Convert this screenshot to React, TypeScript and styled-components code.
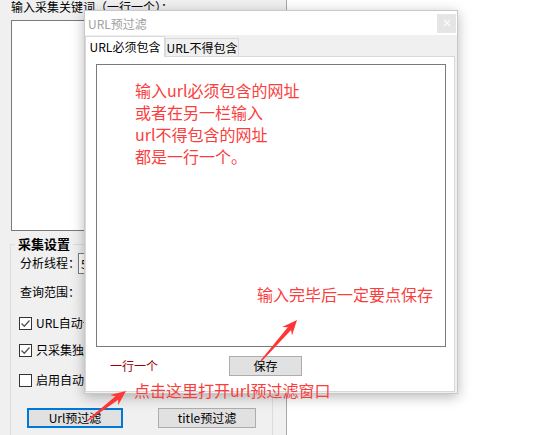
import React from "react";
import styled, { createGlobalStyle } from "styled-components";

const RED = "#fa3e3e";

const GlobalStyle = createGlobalStyle`
  html, body {
    margin: 0;
    padding: 0;
    background: #fff;
  }
  body {
    font-family: "Noto Sans CJK SC", "Liberation Sans", sans-serif;
    font-size: 12px;
    color: #000;
  }
  * {
    box-sizing: border-box;
  }
`;

const Screen = styled.div`
  position: relative;
  width: 534px;
  height: 435px;
  overflow: hidden;
  background: #fff;
`;

/* background window */

const MainWindow = styled.div`
  width: 287px;
  height: 435px;
  background: #f0f0f0;
  border-right: 1px solid #a6a6a6;
  padding-left: 10px;
  display: flex;
  flex-direction: column;
`;

const KeywordLabel = styled.div`
  height: 20px;
  line-height: 14px;
  padding-left: 1px;
  white-space: nowrap;
`;

const KeywordBox = styled.div`
  margin-left: 1px;
  width: 262px;
  height: 211px;
  background: #fff;
  border: 1px solid #7a7a7a;
`;

const Group = styled.fieldset`
  margin: 6px 0 0 0;
  width: 263px;
  flex: 1;
  padding: 0 0 0 9px;
  border: 1px solid #dcdcdc;
  border-bottom: none;
  min-inline-size: auto;
  display: flex;
  flex-direction: column;
`;

const GroupTitle = styled.legend`
  margin-left: -5px;
  padding: 0 3px;
  font-size: 13px;
  font-weight: bold;
  line-height: 14px;
`;

const Row = styled.div<{ $h: number }>`
  height: ${(p) => p.$h}px;
  display: flex;
  align-items: center;
  white-space: nowrap;
  line-height: 14px;
`;

const Combo = styled.div`
  margin-left: -2px;
  width: 60px;
  height: 21px;
  border: 1px solid #7a7a7a;
  background: #fff;
  padding-left: 2px;
  line-height: 19px;
`;

const CheckBox = styled.span`
  width: 13px;
  height: 13px;
  margin-left: -1px;
  margin-right: 4px;
  border: 1px solid #333;
  background: #fff;
  display: inline-flex;
  align-items: center;
  justify-content: center;
  flex-shrink: 0;
`;

const ButtonRow = styled.div`
  display: flex;
  gap: 35px;
  padding-left: 7px;
  margin-top: 10px;
`;

const WinButton = styled.button<{ $w: number; $focused?: boolean }>`
  width: ${(p) => p.$w}px;
  height: 20px;
  padding: 0;
  font: inherit;
  font-size: 12px;
  line-height: 14px;
  color: #000;
  background: #e1e1e1;
  border: ${(p) => (p.$focused ? "2px solid #0078d7" : "1px solid #adadad")};
  display: flex;
  align-items: center;
  justify-content: center;
`;

/* dialog */

const Dialog = styled.div`
  position: absolute;
  left: 84px;
  top: 10px;
  width: 374px;
  height: 384px;
  border: 1px solid #c8c8c8;
  background: #f0f0f0;
  box-shadow: 0 3px 12px rgba(0, 0, 0, 0.28);
  display: flex;
  flex-direction: column;
  z-index: 2;
`;

const TitleBar = styled.div`
  height: 24px;
  background: #fff;
  display: flex;
  align-items: center;
  justify-content: space-between;
  padding-left: 3px;
  padding-right: 1px;
  color: #a0a0a0;
  font-size: 12px;
`;

const CloseBox = styled.div`
  width: 19px;
  height: 19px;
  background: #e5e5e5;
  display: flex;
  align-items: center;
  justify-content: center;
`;

const DialogBody = styled.div`
  flex: 1;
  display: flex;
  flex-direction: column;
  padding: 1px 2px 1px 0;
`;

const TabStrip = styled.div`
  height: 20px;
  display: flex;
  align-items: flex-end;
  position: relative;
  z-index: 1;
`;

const Tab = styled.div<{ $active?: boolean }>`
  width: ${(p) => (p.$active ? 80 : 74)}px;
  height: ${(p) => (p.$active ? 21 : 18)}px;
  margin-bottom: ${(p) => (p.$active ? -1 : 0)}px;
  background: ${(p) => (p.$active ? "#fff" : "#f0f0f0")};
  border: 1px solid #d9d9d9;
  border-bottom: none;
  display: flex;
  align-items: center;
  justify-content: center;
  font-size: 12px;
  line-height: 14px;
  white-space: nowrap;
`;

const TabPage = styled.div`
  flex: 1;
  background: #fff;
  border: 1px solid #d9d9d9;
  padding: 7px 0 0 10px;
  display: flex;
  flex-direction: column;
`;

const NoteBox = styled.div`
  width: 350px;
  height: 283px;
  border: 1px solid #7a7a7a;
  background: #fff;
  display: flex;
  flex-direction: column;
  color: ${RED};
  font-size: 16px;
  line-height: 22px;
  white-space: nowrap;
`;

const Notes = styled.div`
  padding: 14px 0 0 38px;
`;

const SaveNote = styled.div`
  margin-top: auto;
  margin-bottom: 41px;
  padding-left: 160px;
`;

const BottomRow = styled.div`
  margin-top: 9px;
  height: 20px;
  display: flex;
  align-items: center;
`;

const Hint = styled.span`
  margin-left: 14px;
  width: 119px;
  color: #9a0000;
  font-size: 12px;
  line-height: 14px;
`;

/* annotations */

const Callout = styled.div`
  position: absolute;
  left: 134px;
  top: 379px;
  color: ${RED};
  font-size: 16px;
  line-height: 22px;
  white-space: nowrap;
  z-index: 5;
`;

const ArrowLayer = styled.svg`
  position: absolute;
  left: 0;
  top: 0;
  pointer-events: none;
  z-index: 6;
`;

function arrowPoints(tx: number, ty: number, px: number, py: number) {
  const dx = px - tx;
  const dy = py - ty;
  const len = Math.hypot(dx, dy);
  const ux = dx / len;
  const uy = dy / len;
  const nx = -uy;
  const ny = ux;
  const at = (back: number, side: number) =>
    `${(px - ux * back + nx * side).toFixed(1)},${(py - uy * back + ny * side).toFixed(1)}`;
  const tail = (side: number) =>
    `${(tx + nx * side).toFixed(1)},${(ty + ny * side).toFixed(1)}`;
  return [
    at(0, 0),
    at(15, 6.5),
    at(11.5, 2.2),
    tail(0.6),
    tail(-0.6),
    at(11.5, -2.2),
    at(15, -6.5),
  ].join(" ");
}

function Check() {
  return (
    <svg width="11" height="11" viewBox="0 0 11 11">
      <path d="M1.5 5.5 L4.3 8.3 L9.5 2.5" fill="none" stroke="#555" strokeWidth="1.3" />
    </svg>
  );
}

export default function App() {
  return (
    <Screen>
      <GlobalStyle />
      <MainWindow>
        <KeywordLabel>输入采集关键词（一行一个）：</KeywordLabel>
        <KeywordBox />
        <Group>
          <GroupTitle>采集设置</GroupTitle>
          <Row $h={24}>
            分析线程：<Combo>5</Combo>
          </Row>
          <Row $h={33}>查询范围：</Row>
          <Row $h={30}>
            <CheckBox>
              <Check />
            </CheckBox>
            URL自动去重
          </Row>
          <Row $h={24}>
            <CheckBox>
              <Check />
            </CheckBox>
            只采集独立域名
          </Row>
          <Row $h={36}>
            <CheckBox />
            启用自动保存
          </Row>
          <ButtonRow>
            <WinButton $w={96} $focused>
              Url预过滤
            </WinButton>
            <WinButton $w={98}>title预过滤</WinButton>
          </ButtonRow>
        </Group>
      </MainWindow>

      <Dialog>
        <TitleBar>
          <span>URL预过滤</span>
          <CloseBox>
            <svg width="8" height="8" viewBox="0 0 8 8">
              <path d="M1 1 L7 7 M7 1 L1 7" stroke="#fafafa" strokeWidth="1.4" />
            </svg>
          </CloseBox>
        </TitleBar>
        <DialogBody>
          <TabStrip>
            <Tab $active>URL必须包含</Tab>
            <Tab>URL不得包含</Tab>
          </TabStrip>
          <TabPage>
            <NoteBox>
              <Notes>
                <div>输入url必须包含的网址</div>
                <div>或者在另一栏输入</div>
                <div>url不得包含的网址</div>
                <div>都是一行一个。</div>
              </Notes>
              <SaveNote>输入完毕后一定要点保存</SaveNote>
            </NoteBox>
            <BottomRow>
              <Hint>一行一个</Hint>
              <WinButton $w={73}>保存</WinButton>
            </BottomRow>
          </TabPage>
        </DialogBody>
      </Dialog>

      <Callout>点击这里打开url预过滤窗口</Callout>

      <ArrowLayer width="534" height="435" viewBox="0 0 534 435">
        <polygon points={arrowPoints(261, 361, 297, 320)} fill="#ff3636" />
        <polygon points={arrowPoints(87, 421, 126, 391)} fill="#ff3636" />
      </ArrowLayer>
    </Screen>
  );
}
